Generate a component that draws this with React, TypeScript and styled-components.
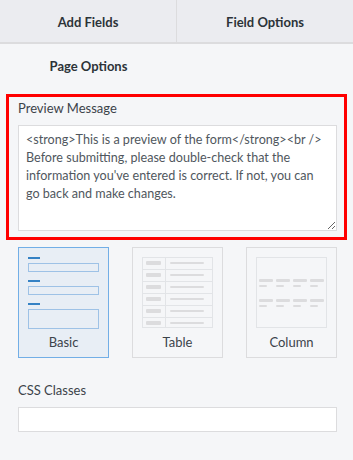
import React from "react"
import styled, { createGlobalStyle } from "styled-components"

const GlobalStyle = createGlobalStyle`
  body {
    margin: 0;
    background: #f5f6f8;
    font-family: Lato, "Open Sans", sans-serif;
  }
`

const previewText =
  "<strong>This is a preview of the form</strong><br />\nBefore submitting, please double-check that the information you've entered is correct. If not, you can go back and make changes."

const BasicIcon = () => (
  <svg width="72" height="72" viewBox="0 0 72 72">
    {[0, 23, 46].map((y, i) => (
      <g key={y}>
        <rect x="0" y={y} width="12" height="2" fill="#3582c4" />
        <rect x="0.5" y={y + 6.5} width="70" height={i === 2 ? 19 : 8} fill="none" stroke="#9ec2e6" />
      </g>
    ))}
  </svg>
)

const TableIcon = () => (
  <svg width="72" height="72" viewBox="0 0 72 72">
    <rect x="0.5" y="0.5" width="70" height="70" fill="#f5f6f8" stroke="#e2e4e7" />
    {[0, 1, 2, 3, 4, 5].map(i => (
      <g key={i}>
        {i > 0 && <line x1="0" x2="71" y1={i * 12 + 0.5} y2={i * 12 + 0.5} stroke="#e2e4e7" />}
        <rect x="4" y={i * 12 + 4} width="15" height="4" rx="1" fill="#dcdcde" />
        <rect x="28" y={i * 12 + 5} width="34" height="2" rx="1" fill="#dcdcde" />
      </g>
    ))}
    <line x1="23.5" x2="23.5" y1="0" y2="71" stroke="#e2e4e7" />
  </svg>
)

const ColumnIcon = () => (
  <svg width="72" height="72" viewBox="0 0 72 72">
    <rect x="0.5" y="0.5" width="70" height="70" fill="#f5f6f8" stroke="#e2e4e7" />
    {[22, 42].map(y =>
      [3, 20, 37, 54].map(x => (
        <g key={`${x}-${y}`}>
          <rect x={x} y={y} width="14" height="3" rx="1" fill="#dcdcde" />
          <rect x={x} y={y + 6} width="8" height="2" rx="1" fill="#dcdcde" />
        </g>
      ))
    )}
  </svg>
)

const layouts = [
  { name: "Basic", icon: <BasicIcon />, active: true },
  { name: "Table", icon: <TableIcon />, active: false },
  { name: "Column", icon: <ColumnIcon />, active: false },
]

export default function App() {
  return (
    <S.Page>
      <GlobalStyle />
      <S.Tabs>
        <S.Tab>Add Fields</S.Tab>
        <S.Tab $last>Field Options</S.Tab>
        <S.Tab $active>Page Options</S.Tab>
      </S.Tabs>

      <S.Highlight>
        <S.Label>Preview Message</S.Label>
        <S.TextArea defaultValue={previewText} />
      </S.Highlight>

      <S.Layouts>
        {layouts.map(layout => (
          <S.LayoutCard key={layout.name} $active={layout.active}>
            {layout.icon}
            <S.LayoutName>{layout.name}</S.LayoutName>
          </S.LayoutCard>
        ))}
      </S.Layouts>

      <S.Field>
        <S.Label>CSS Classes</S.Label>
        <S.Input type="text" />
      </S.Field>
    </S.Page>
  )
}

const S = {
  Page: styled.div`
    width: 353px;
    height: 460px;
    background: #f5f6f8;
    overflow: hidden;
  `,
  Tabs: styled.div`
    display: grid;
    grid-template-columns: 177px 176px;
  `,
  Tab: styled.div<{ $active?: boolean; $last?: boolean }>`
    box-sizing: border-box;
    height: 44px;
    padding-top: ${p => (p.$active ? "0" : "2px")};
    display: flex;
    align-items: center;
    justify-content: center;
    font-size: 13px;
    font-weight: 700;
    color: #2c3338;
    background: ${p => (p.$active ? "#f5f6f8" : "#ebecf0")};
    border-bottom: ${p => (p.$active ? "none" : "2px solid #dcdcde")};
    border-right: ${p => (p.$active || p.$last ? "none" : "1px solid #dcdcde")};
  `,
  Highlight: styled.div`
    margin: 6px 6px 0 6px;
    border: 3px solid #ff0000;
    padding: 2px 7px 6px 9px;
  `,
  Label: styled.div`
    font-size: 13px;
    line-height: 18px;
    color: #3c434a;
    margin-bottom: 8px;
  `,
  TextArea: styled.textarea`
    display: block;
    box-sizing: border-box;
    width: 100%;
    height: 106px;
    margin: 0;
    padding: 5px 7px;
    border: 1px solid #dcdcde;
    border-radius: 0;
    background: #fff;
    font-family: Lato, "Open Sans", sans-serif;
    font-size: 12.6px;
    line-height: 18px;
    color: #50575e;
    resize: vertical;
    outline: none;
  `,
  Layouts: styled.div`
    display: flex;
    justify-content: space-between;
    padding: 7px 16px 0 18px;
  `,
  LayoutCard: styled.div<{ $active?: boolean }>`
    box-sizing: border-box;
    width: 91px;
    height: 111px;
    display: flex;
    flex-direction: column;
    align-items: center;
    padding-top: 9px;
    border: 1px solid ${p => (p.$active ? "#72aee6" : "#dcdcde")};
    background: ${p => (p.$active ? "#e8eef5" : "#f5f6f8")};
  `,
  LayoutName: styled.div`
    margin-top: 4px;
    font-size: 13px;
    line-height: 18px;
    color: #3c434a;
  `,
  Field: styled.div`
    padding: 23px 16px 0 18px;
  `,
  Input: styled.input`
    display: block;
    box-sizing: border-box;
    width: 100%;
    height: 25px;
    margin: 0;
    border: 1px solid #dcdcde;
    border-radius: 0;
    background: #fff;
    outline: none;
  `,
}
